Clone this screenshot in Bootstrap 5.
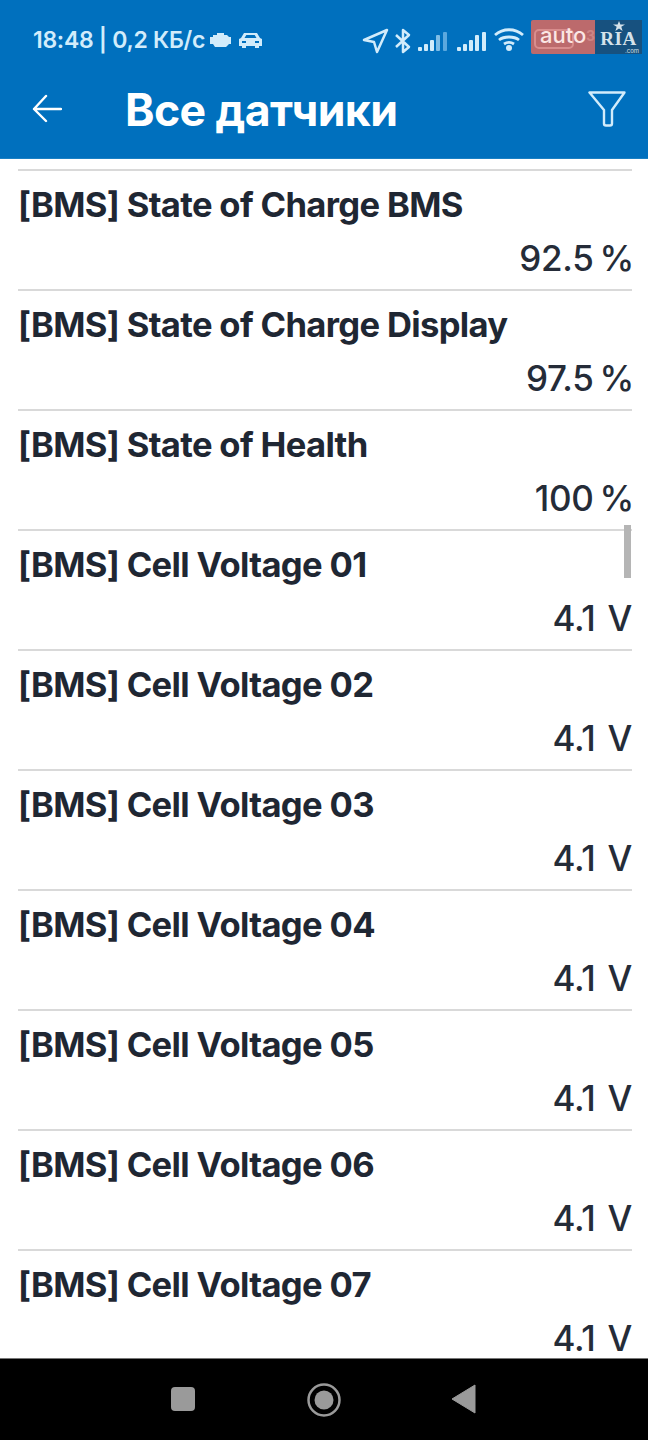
<!DOCTYPE html>
<html lang="ru">
<head>
  <meta charset="UTF-8">
  <meta name="viewport" content="width=device-width, initial-scale=1.0">
  <title>Все датчики</title>
  <link href="https://cdn.jsdelivr.net/npm/bootstrap@5.3.0/dist/css/bootstrap.min.css" rel="stylesheet">
  <style>
    html, body { height: 100%; }
    body { font-family: Inter, "Liberation Sans", sans-serif; background: #fff; color: #1f2733; overflow: hidden; }
    .app-screen { height: 1440px; width: 648px; }
    .app-head { background: #0070be; height: 159px; flex: none; color: #fff; border-bottom: 1px solid #1a80c4; }
    .status-row { height: 70px; padding: 21px 0 0 33px; }
    .status-text { font-size: 23px; font-weight: 600; color: #d2ecfb; letter-spacing: -.3px; line-height: 38px; }
    .status-icons { position: absolute; left: 360px; top: 27px; }
    .title-row { height: 78px; padding-left: 32px; }
    .back-slot { width: 93px; }
    .page-title { font-size: 44.6px; font-weight: 700; letter-spacing: -.6px; margin: 2px 0 0; line-height: 1; }
    .filter-slot { margin-left: auto; margin-right: 22px; }
    .watermark { position: absolute; left: 531px; top: 20px; width: 111px; height: 34px; }
    .wm-auto { width: 64px; background: #bc6a6c; color: #fbe6e4; font-size: 22px; font-weight: 500; line-height: 30px; padding-left: 9px; border-radius: 2px 0 0 2px; white-space: nowrap; position: relative; }
    .wm-box { position: absolute; left: 3px; top: 9px; width: 40px; height: 20px; border: 2px solid #d98d8d; border-radius: 5px; }
    .wm-word { position: relative; }
    .wm-three { position: absolute; left: 55px; top: 1px; font-size: 14px; color: #cf8585; font-weight: 700; }
    .wm-ria { width: 47px; background: #17517f; color: #d6e2ea; font-family: "Liberation Serif", serif; font-weight: 700; font-size: 19px; line-height: 17px; text-align: center; letter-spacing: .5px; padding-top: 10px; position: relative; }
    .wm-star { position: absolute; left: 18px; top: 1px; }
    .wm-com { position: absolute; right: 3px; bottom: 0; font-family: Inter, sans-serif; font-size: 6px; line-height: 7px; font-weight: 400; letter-spacing: 0; }
    .sensor-area { flex: 1 1 auto; overflow: hidden; padding-top: 10px; position: relative; }
    .sensor-row { height: 120px; margin: 0 16px 0 18px; border-top: 2px solid #d9d9d9; padding: 13px 0 0 0; }
    .sensor-name { font-size: 34.6px; font-weight: 700; line-height: 40px; letter-spacing: -.66px; white-space: nowrap; }
    .sensor-val { font-size: 35px; font-weight: 500; line-height: 36px; text-align: right; margin-top: 16px; letter-spacing: -.3px; color: #252c38; }
    .unit-pct { margin-left: -3px; margin-right: -2px; }
    .unit-volt { margin-left: 3px; }
    .scroll-thumb { position: absolute; left: 624px; top: 525px; width: 7px; height: 53px; background: #b5b5b5; }
    .nav-bottom { background: #000; height: 82px; flex: none; border-top: 1px solid #777; position: relative; }
    .nav-bottom svg { position: absolute; }
    .nav-square { left: 170px; top: 27px; }
    .nav-circle { left: 306px; top: 23px; }
    .nav-tri { left: 451px; top: 25px; }
  </style>
</head>
<body>
  <div class="app-screen d-flex flex-column position-relative">
    <div class="app-head">
      <div class="status-row d-flex align-items-start">
        <span class="status-text">18:48 | 0,2 КБ/с</span>
        <!-- check engine + car -->
        <svg class="ms-1 mt-2" width="62" height="22" viewBox="0 0 62 22" fill="#d2ecfb">
          <path d="M1 8h3V6h4V4h7v2h3l2 2h2v7h-2l-3 3H6l-2-3H1z"/>
          <path d="M32 9l3-5h13l3 5 2 1v7h-3v2h-4v-2H37v2h-4v-2h-3v-7zm3.500 0h12l-1.800-3h-8.400zM33 12v2h4v-2zm13 0v2h4v-2z" fill-rule="evenodd"/>
        </svg>
      </div>
      <svg class="status-icons" width="168" height="28" viewBox="0 0 168 28" fill="none" stroke="#d2ecfb">
        <path d="M4 13L27 3 17 25 14 15z" stroke-width="2.500" stroke-linejoin="round"/>
        <path d="M36 8l13 12-6 5V3l6 5-13 12" stroke-width="2.500" stroke-linejoin="round"/>
        <g stroke="none" fill="#d2ecfb">
          <rect x="58" y="20" width="4" height="4" rx="1"/><rect x="64" y="17" width="4" height="7" rx="1"/><rect x="70" y="13" width="4" height="11" rx="1"/>
          <rect x="76" y="8" width="4" height="16" rx="1" fill="#7fbde6"/><rect x="83" y="5" width="4" height="19" rx="1" fill="#5ba8de"/>
          <rect x="97" y="20" width="4" height="4" rx="1"/><rect x="103" y="17" width="4" height="7" rx="1"/><rect x="109" y="13" width="4" height="11" rx="1"/>
          <rect x="115" y="8" width="4" height="16" rx="1"/><rect x="122" y="5" width="4" height="19" rx="1"/>
          <circle cx="149" cy="21" r="3"/>
        </g>
        <path d="M135 9c8-7 20-7 28 0M139 14c5-4 15-4 20 0M144 18c3-2 7-2 10 0" stroke-width="2.800" transform="translate(0 -1)"/>
      </svg>
      <div class="title-row d-flex align-items-center">
        <div class="back-slot">
          <svg class="d-block" width="30" height="30" viewBox="0 0 30 30" fill="none" stroke="#fff" stroke-width="2.400" stroke-linecap="round" stroke-linejoin="round">
            <path d="M2 15h27M14 2L2 15l12 12"/>
          </svg>
        </div>
        <h1 class="page-title">Все датчики</h1>
        <div class="filter-slot">
          <svg class="d-block" width="38" height="36" viewBox="0 0 38 36" fill="none" stroke="#d2ecfb" stroke-width="2.400" stroke-linejoin="round">
            <path d="M1.500 1.500h35L24 19v13.500q0 2-2 2h-4q-2 0-2-2V19z"/>
          </svg>
        </div>
      </div>
    </div>

    <div class="watermark d-flex">
      <div class="wm-auto"><span class="wm-box"></span><span class="wm-word">auto</span><span class="wm-three">3</span></div>
      <div class="wm-ria">
        <svg class="wm-star" width="12" height="10" viewBox="0 0 12 10" fill="#d6e2ea"><path d="M6 0l1.400 3.500H12L8.300 5.800 9.600 10 6 7.400 2.400 10l1.300-4.200L0 3.500h4.600z"/></svg>
        RIA<span class="wm-com">.com</span>
      </div>
    </div>

    <div class="sensor-area" id="sensors"></div>
    <div class="scroll-thumb"></div>

    <div class="nav-bottom">
      <svg class="nav-square" width="26" height="26" viewBox="0 0 26 26"><rect x="1" y="1" width="24" height="24" rx="4" fill="#9a9a9a"/></svg>
      <svg class="nav-circle" width="36" height="36" viewBox="0 0 36 36"><circle cx="18" cy="18" r="15.500" fill="none" stroke="#9a9a9a" stroke-width="2.500"/><circle cx="18" cy="18" r="9.500" fill="#9a9a9a"/></svg>
      <svg class="nav-tri" width="26" height="30" viewBox="0 0 26 30"><path d="M1 15L24 1v28z" fill="#9a9a9a" stroke="#9a9a9a" stroke-linejoin="round"/></svg>
    </div>
  </div>

  <script>
    const sensors = [
      ["[BMS] State of Charge BMS", "92.5 ", "%", "unit-pct"],
      ["[BMS] State of Charge Display", "97.5 ", "%", "unit-pct"],
      ["[BMS] State of Health", "100 ", "%", "unit-pct"],
      ["[BMS] Cell Voltage 01", "4.1 ", "V", "unit-volt"],
      ["[BMS] Cell Voltage 02", "4.1 ", "V", "unit-volt"],
      ["[BMS] Cell Voltage 03", "4.1 ", "V", "unit-volt"],
      ["[BMS] Cell Voltage 04", "4.1 ", "V", "unit-volt"],
      ["[BMS] Cell Voltage 05", "4.1 ", "V", "unit-volt"],
      ["[BMS] Cell Voltage 06", "4.1 ", "V", "unit-volt"],
      ["[BMS] Cell Voltage 07", "4.1 ", "V", "unit-volt"]
    ];
    const area = document.getElementById("sensors");
    sensors.forEach(function(s) {
      const row = document.createElement("div");
      row.className = "sensor-row";
      row.innerHTML = '<div class="sensor-name">' + s[0] + '</div><div class="sensor-val">' + s[1] + '<span class="' + s[3] + '">' + s[2] + '</span></div>';
      area.appendChild(row);
    });
  </script>
</body>
</html>
